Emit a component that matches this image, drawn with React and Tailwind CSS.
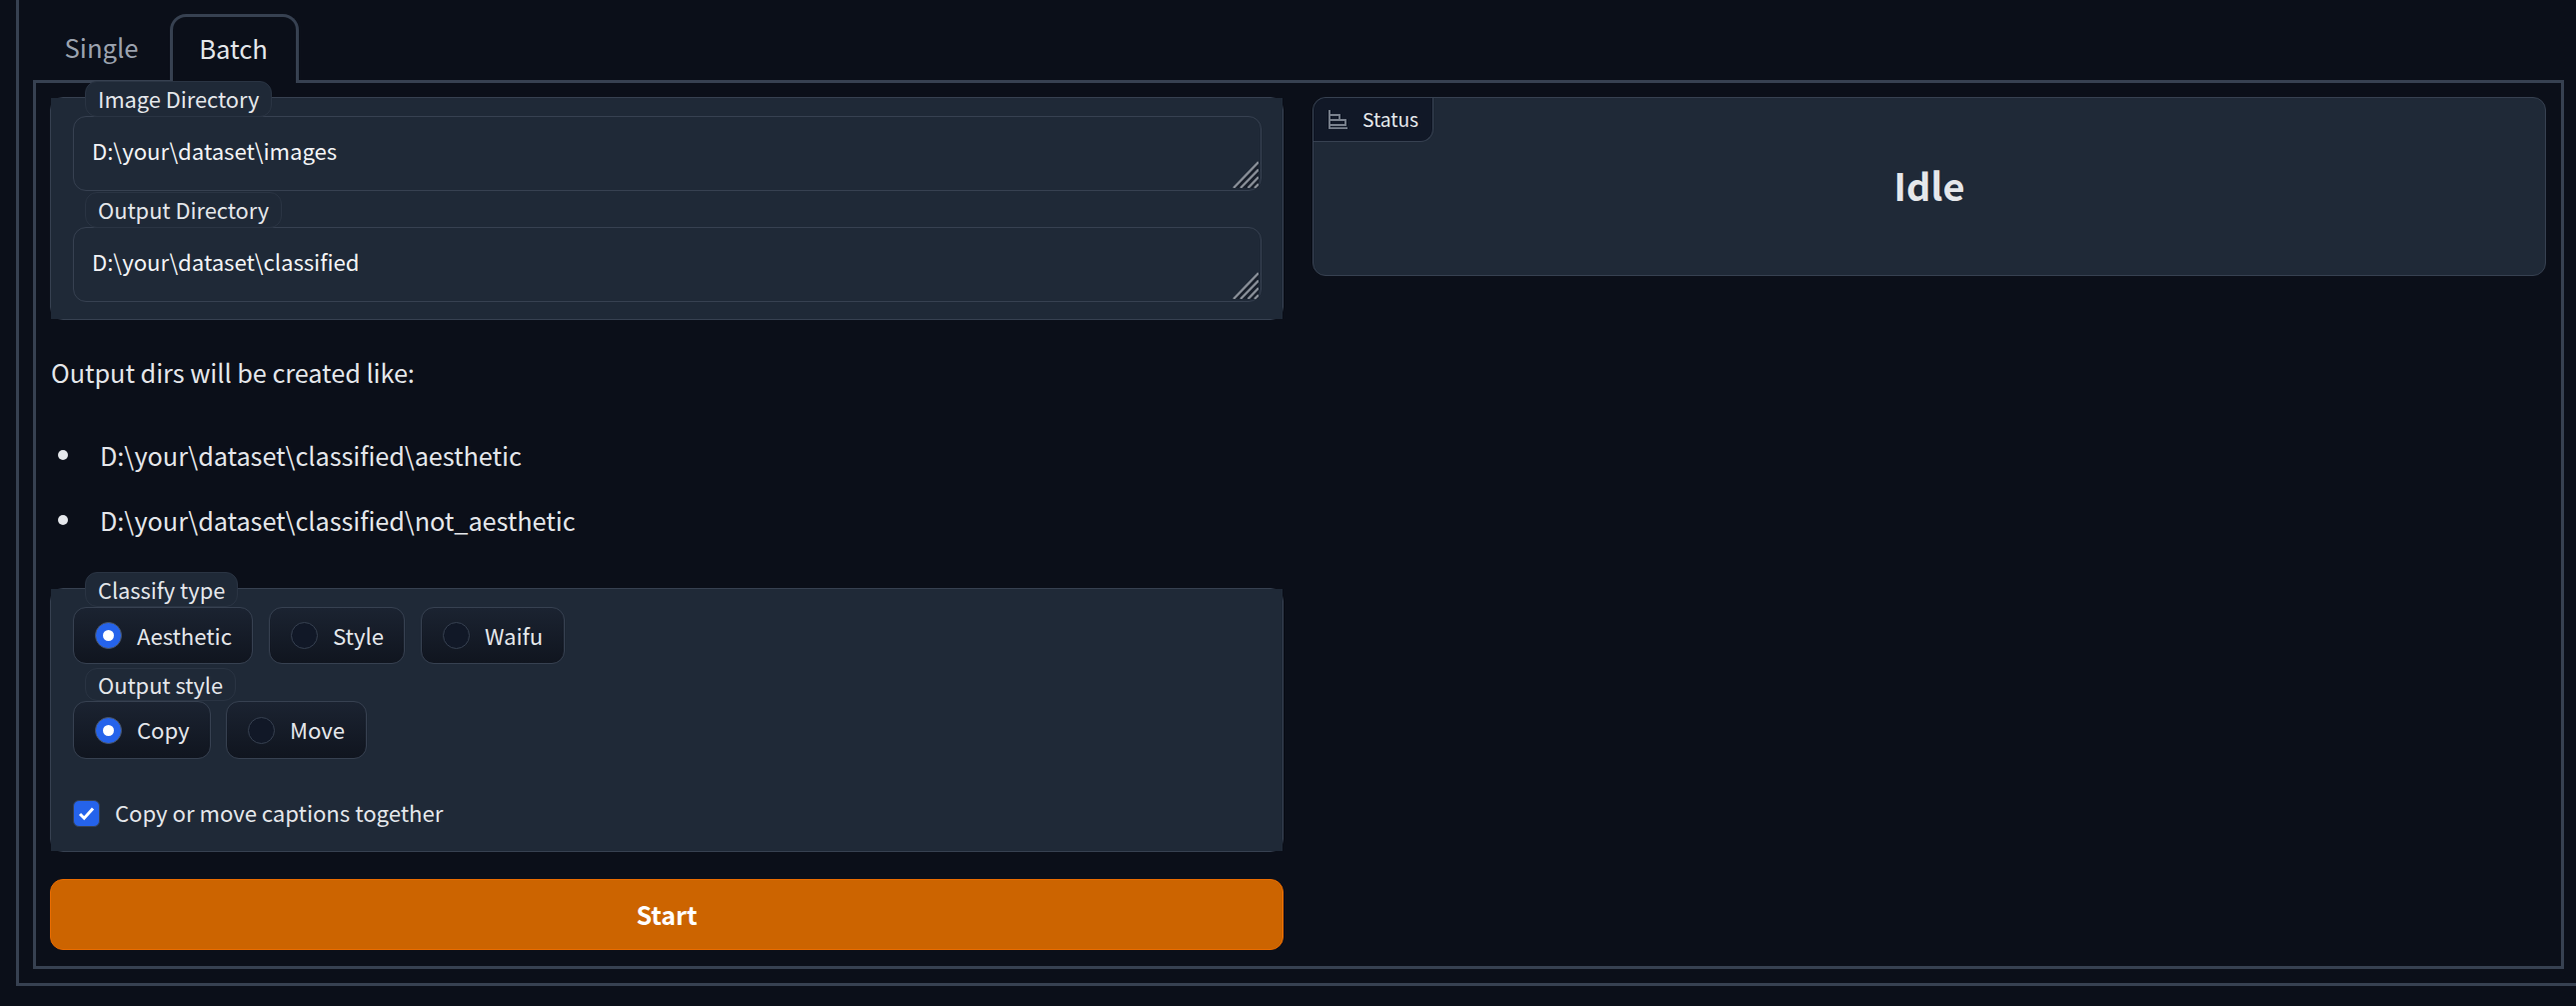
const FONT = "font-['Noto_Sans_CJK_SC','Noto_Sans',sans-serif]";

function Grip() {
  return (
    <svg className="absolute right-[2px] bottom-[2px]" width="26" height="27" viewBox="0 0 26 27" fill="none">
      <path d="M0 27L26 0V27Z" fill="#171e2a" />
      <path d="M1 27L26 1M8 27L26 8.5M15.5 27L26 16M22 27L26 23" stroke="#878d96" strokeWidth="2.4" />
    </svg>
  );
}

function FieldLabel({ children, className = "" }) {
  return (
    <div className={`relative z-10 ml-[12px] flex h-[36px] w-fit items-center rounded-[12px] border border-[#2a3443] bg-[#1f2937] px-[12px] text-[21.8px] leading-none text-[#e5e7eb] ${className}`}>
      {children}
    </div>
  );
}

function TextField({ value }) {
  return (
    <div className="relative flex h-[75px] items-start rounded-[13px] border border-[#374151] bg-[#1f2937] px-[18px] pt-[14px] text-[22.1px] leading-[38px] text-[#f3f4f6]">
      {value}
      <Grip />
    </div>
  );
}

function Radio({ label, checked, w }) {
  return (
    <div className={`flex h-full items-center rounded-[13px] border border-[#374151] bg-gradient-to-b from-[#1b2331] to-[#10151f] pl-[21px] text-[22.1px] leading-none text-[#e5e7eb] ${w}`}>
      {checked ? (
        <span className="flex h-[27px] w-[27px] items-center justify-center rounded-full border border-[#4b5563] bg-[#2563eb]">
          <span className="h-[11px] w-[11px] rounded-full bg-white" />
        </span>
      ) : (
        <span className="h-[27px] w-[27px] rounded-full border border-[#374151] bg-[#111827]" />
      )}
      <span className="ml-[15px] -mt-[1px]">{label}</span>
    </div>
  );
}

function Block({ children, className = "" }) {
  return (
    <div className={`rounded-[13px] border border-[#374151] ${className}`}>
      <div className="h-full bg-[#1f2937] pl-[22px] pr-[21px]">{children}</div>
    </div>
  );
}

export default function App() {
  return (
    <div className={`h-[1006px] w-full overflow-hidden bg-[#0b0f19] pl-[16px] ${FONT}`}>
      <div className="h-[986px] border-b-[3px] border-l-[3px] border-[#374151] pl-[14px] pr-[12px] pt-[14px]">
        <div className="relative z-10 flex h-[69px] items-stretch">
          <div className="flex w-[137px] items-center justify-center pb-[4px] text-[25.6px] leading-none text-[#9ca3af]">Single</div>
          <div className="flex w-[129px] items-center justify-center rounded-t-[16px] border-x-[3px] border-t-[3px] border-[#374151] bg-[#0b0f19] pb-[4px] pr-[2px] text-[25.6px] leading-none text-[#e5e7eb]">Batch</div>
        </div>
        <div className="-mt-[3px] flex h-[889px] gap-[29px] border-[3px] border-[#374151] pl-[14px] pr-[15px] pt-[14px]">
          <div className="w-[1234px] shrink-0">
            <Block className="h-[223px]">
              <FieldLabel className="-top-[17px] -mb-[18px]">Image Directory</FieldLabel>
              <TextField value="D:\your\dataset\images" />
              <FieldLabel className="mt-[1px] -mb-[1px]">Output Directory</FieldLabel>
              <TextField value="D:\your\dataset\classified" />
            </Block>
            <div className="pl-[1px] pt-[34px] text-[25.2px] leading-[36px] text-[#e5e7eb]">
              Output dirs will be created like:
            </div>
            <ul className="mt-[47px] flex flex-col gap-[29px] text-[25.2px] leading-[36px] text-[#e5e7eb]">
              <li className="flex items-center pl-[8px]">
                <span className="mr-[32px] h-[10px] w-[10px] rounded-full bg-[#e5e7eb]" />
                D:\your\dataset\classified\aesthetic
              </li>
              <li className="flex items-center pl-[8px]">
                <span className="mr-[32px] h-[10px] w-[10px] rounded-full bg-[#e5e7eb]" />
                D:\your\dataset\classified\not_aesthetic
              </li>
            </ul>
            <Block className="mt-[50px] h-[264px]">
              <FieldLabel className="-top-[17px] -mb-[17px] !h-[35px]">Classify type</FieldLabel>
              <div className="flex h-[57px] gap-[16px]">
                <Radio label="Aesthetic" checked w="w-[180px]" />
                <Radio label="Style" w="w-[136px]" />
                <Radio label="Waifu" w="w-[144px]" />
              </div>
              <FieldLabel className="mt-[4px] !h-[33px]">Output style</FieldLabel>
              <div className="flex h-[58px] gap-[15px]">
                <Radio label="Copy" checked w="w-[138px]" />
                <Radio label="Move" w="w-[141px]" />
              </div>
              <div className="mt-[41px] flex h-[27px] items-center text-[22.1px] leading-none text-[#e5e7eb]">
                <span className="flex h-[27px] w-[27px] items-center justify-center rounded-[6px] border border-[#374151] bg-[#2563eb]">
                  <svg width="17" height="15" viewBox="0 0 17 15" fill="none">
                    <path d="M2 8L6.2 12.2L15 2.5" stroke="white" strokeWidth="3" />
                  </svg>
                </span>
                <span className="ml-[15px] -mt-[2px]">Copy or move captions together</span>
              </div>
            </Block>
            <button className="mt-[27px] flex h-[71px] w-full items-center justify-center rounded-[13px] border border-[#ea6c00] bg-[#cc6400] text-[25px] font-semibold leading-none text-white">
              Start
            </button>
          </div>
          <div className="relative h-[179px] w-[1234px] shrink-0 rounded-[13px] border border-[#374151] bg-[#1f2937]">
            <div className="flex h-[44px] w-[120px] items-center rounded-br-[13px] rounded-tl-[13px] border-b border-r border-[#374151] bg-[#111827] pl-[15px] text-[19.2px] leading-none text-[#e5e7eb]">
              <svg width="19" height="19" viewBox="0 0 19 19" fill="none" stroke="#7b828e" strokeWidth="1.8">
                <path d="M1 0V18.2H19M1 5H11V10H1M1 10H17V15H1" />
              </svg>
              <span className="ml-[15px]">Status</span>
            </div>
            <div className="pt-[15px] text-center text-[38px] font-semibold leading-[56px] text-[#e5e7eb]">Idle</div>
          </div>
        </div>
      </div>
    </div>
  );
}
